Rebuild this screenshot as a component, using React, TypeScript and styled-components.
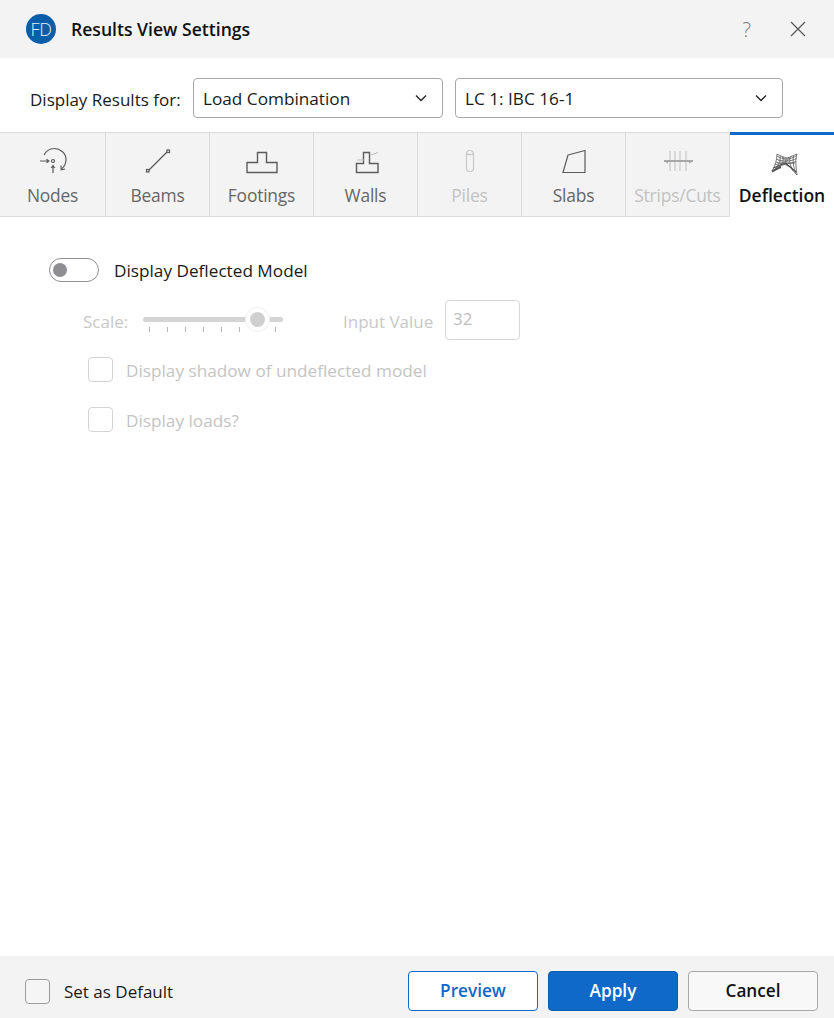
import React from "react";
import styled, { createGlobalStyle } from "styled-components";

const GlobalStyle = createGlobalStyle`
  html, body {
    margin: 0;
    padding: 0;
    background: #fff;
  }
  * {
    box-sizing: border-box;
  }
  body {
    font-family: "Open Sans", "Noto Sans", "Liberation Sans", sans-serif;
    color: #1a1a1a;
  }
`;

const Dialog = styled.div`
  width: 834px;
  height: 1018px;
  display: flex;
  flex-direction: column;
  overflow: hidden;
  background: #fff;
`;

const TitleBar = styled.header`
  height: 58px;
  flex: none;
  display: flex;
  align-items: center;
  padding: 0 27px 0 26px;
  background: #f3f3f3;
`;

const Logo = styled.div`
  width: 30px;
  height: 30px;
  border-radius: 50%;
  background: #0a5ea8;
  color: #e8f0f8;
  font-size: 18px;
  font-weight: 300;
  letter-spacing: -0.5px;
  display: flex;
  align-items: center;
  justify-content: center;
`;

const Title = styled.h1`
  margin: 0 0 0 15px;
  flex: 1;
  font-size: 17.6px;
  font-weight: 600;
  color: #111;
`;

const HelpMark = styled.span`
  font-size: 20px;
  font-weight: 300;
  color: #777;
  margin-right: 38px;
`;

const SelectRow = styled.div`
  height: 74px;
  flex: none;
  display: flex;
  align-items: center;
  padding: 6px 0 0 30px;
`;

const RowLabel = styled.span`
  width: 163px;
  padding-top: 3px;
  font-size: 17px;
  color: #1a1a1a;
`;

const SelectBox = styled.div<{ $width: number }>`
  width: ${({ $width }) => $width}px;
  height: 40px;
  margin-right: 12px;
  padding: 0 15px 0 9px;
  display: flex;
  align-items: center;
  justify-content: space-between;
  border: 1px solid #a8a8a8;
  border-radius: 4px;
  background: #fff;
  font-size: 17.2px;
  color: #1a1a1a;
`;

const TabBar = styled.nav`
  height: 85px;
  flex: none;
  display: flex;
  background: #f3f3f3;
  border-top: 1px solid #dcdcdc;
  border-bottom: 1px solid #dcdcdc;
`;

const Tab = styled.div<{ $active?: boolean; $disabled?: boolean }>`
  width: 104px;
  flex: none;
  display: flex;
  flex-direction: column;
  align-items: center;
  padding-top: 14px;
  border-right: 1px solid #dcdcdc;
  font-size: 17.4px;
  letter-spacing: -0.2px;
  font-weight: ${({ $active }) => ($active ? 600 : 400)};
  color: ${({ $active, $disabled }) =>
    $active ? "#111" : $disabled ? "#c2c2c2" : "#666"};
  background: ${({ $active }) => ($active ? "#fff" : "transparent")};

  &:first-child {
    width: 106px;
  }

  &:last-child {
    border-right: none;
    margin: -1px 0;
    height: 85px;
    border-top: 3px solid #0f69c9;
    padding-top: 12px;
    font-size: 17.5px;
    letter-spacing: 0;
  }
`;

const TabIcon = styled.svg<{ $disabled?: boolean }>`
  width: 32px;
  height: 30px;
  flex: none;
  fill: none;
  stroke: ${({ $disabled }) => ($disabled ? "#c8c8c8" : "#5c5c5c")};
  stroke-width: 1.2;
`;

const TabLabel = styled.span`
  margin-top: 6px;
  line-height: 24px;
  white-space: nowrap;
`;

const Content = styled.main`
  flex: 1;
  padding: 41px 0 0 49px;
  display: flex;
  flex-direction: column;
`;

const ToggleRow = styled.div`
  display: flex;
  align-items: center;
  gap: 15px;
  height: 24px;
  font-size: 17.2px;
`;

const Toggle = styled.div`
  position: relative;
  width: 50px;
  height: 24px;
  border: 1px solid #8f8f94;
  border-radius: 12px;
  background: #fff;
`;

const ToggleKnob = styled.span`
  position: absolute;
  left: 3px;
  top: 4px;
  width: 14px;
  height: 14px;
  border-radius: 50%;
  background: #8e8e93;
`;

const ScaleRow = styled.div`
  display: flex;
  align-items: center;
  height: 40px;
  margin-top: 18px;
  padding-left: 34px;
  font-size: 17px;
  color: #c8c8c8;
`;

const ScaleLabel = styled.span`
  width: 60px;
  padding-top: 2px;
`;

const Slider = styled.div`
  position: relative;
  width: 140px;
  height: 24px;
  margin-right: 60px;
`;

const SliderTrack = styled.div`
  position: absolute;
  left: 0;
  right: 0;
  top: 9px;
  height: 5px;
  border-radius: 2.5px;
  background: #d4d4d4;
`;

const SliderTicks = styled.div`
  position: absolute;
  left: 6px;
  top: 19px;
  width: 127px;
  display: flex;
  justify-content: space-between;
`;

const SliderTick = styled.span<{ $hidden?: boolean }>`
  width: 1px;
  height: 5px;
  background: ${({ $hidden }) => ($hidden ? "transparent" : "#b4b4b4")};
`;

const SliderThumb = styled.div`
  position: absolute;
  left: 102px;
  top: -1px;
  width: 25px;
  height: 25px;
  border-radius: 50%;
  background: #fff;
  border: 1px solid #f0f0f0;
  display: flex;
  align-items: center;
  justify-content: center;

  &::after {
    content: "";
    width: 15px;
    height: 15px;
    border-radius: 50%;
    background: #cfcfcf;
  }
`;

const ValueLabel = styled.span`
  width: 102px;
  padding-top: 2px;
`;

const ValueInput = styled.div`
  width: 75px;
  height: 40px;
  padding: 0 0 3px 7px;
  display: flex;
  align-items: center;
  border: 1px solid #d8d8d8;
  border-radius: 4px;
  color: #bdbdbd;
`;

const CheckRow = styled.label<{ $top: number }>`
  display: flex;
  align-items: center;
  gap: 13px;
  height: 25px;
  margin-top: ${({ $top }) => $top}px;
  padding-left: 39px;
  font-size: 17.2px;
  color: #c4c4c4;
`;

const CheckText = styled.span`
  padding-top: 1px;
`;

const CheckBox = styled.span<{ $enabled?: boolean }>`
  width: 25px;
  height: 25px;
  flex: none;
  border-radius: 4px;
  background: ${({ $enabled }) => ($enabled ? "#f5f5f5" : "#fff")};
  border: 1px solid ${({ $enabled }) => ($enabled ? "#9c9c9c" : "#d4d4d4")};
`;

const Footer = styled.footer`
  height: 62px;
  flex: none;
  display: flex;
  align-items: center;
  padding: 8px 16px 0 25px;
  background: #f3f3f3;
`;

const DefaultRow = styled.label`
  display: flex;
  align-items: center;
  gap: 14px;
  flex: 1;
  font-size: 17px;
  color: #1a1a1a;
`;

const Button = styled.button<{ $variant: "outline" | "primary" | "plain" }>`
  width: 130px;
  height: 40px;
  margin-left: 10px;
  border-radius: 4px;
  font-family: inherit;
  font-size: 17.2px;
  font-weight: 600;
  padding: 0 0 2px;
  border: 1px solid
    ${({ $variant }) =>
      $variant === "plain" ? "#a8a8a8" : $variant === "primary" ? "#0d5cb0" : "#0f69c9"};
  background: ${({ $variant }) =>
    $variant === "plain" ? "#f8f8f8" : $variant === "primary" ? "#0f69c9" : "#fff"};
  color: ${({ $variant }) =>
    $variant === "plain" ? "#111" : $variant === "primary" ? "#fff" : "#0f69c9"};
`;

const Chevron = () => (
  <svg width="12" height="8" viewBox="0 0 12 8" fill="none" stroke="#222" strokeWidth="1.3">
    <path d="M1 1.5l5 5 5-5" />
  </svg>
);

const NodesIcon = () => (
  <TabIcon viewBox="0 0 32 30">
    <path d="M7 8C9.500 3.500 13 1.500 17 1.500c6.500 0 12 5 12 11 0 4-2 7.500-4.500 9.500" />
    <path d="M24 18.500l.2 4.300 3.800-.8" />
    <circle cx="16" cy="14" r="1.500" />
    <path d="M3 14h8.500M9.500 12.200l2.400 1.800-2.400 1.800" />
    <path d="M16 26v-7M14.200 21l1.800-2.400 1.800 2.400" />
  </TabIcon>
);

const BeamsIcon = () => (
  <TabIcon viewBox="0 0 32 30">
    <path d="M6 24L26 4" />
    <rect x="4.500" y="22.500" width="2.500" height="2.500" fill="#f3f3f3" />
    <rect x="25" y="3" width="2.500" height="2.500" fill="#f3f3f3" />
  </TabIcon>
);

const FootingsIcon = () => (
  <TabIcon viewBox="0 0 32 30" style={{ strokeWidth: 1.4 }}>
    <path d="M11.500 5.500h9v10H31v10H1v-10h10.500z" />
  </TabIcon>
);

const WallsIcon = () => (
  <TabIcon viewBox="0 0 32 30" style={{ strokeWidth: 1.4 }}>
    <path d="M13.500 5.500h6v11h8.500v9H6.500v-9h7z" />
    <path d="M7 13h7M21 8l7-2.500" stroke="#bcbcbc" strokeWidth="1" />
  </TabIcon>
);

const PilesIcon = () => (
  <TabIcon viewBox="0 0 32 30" $disabled>
    <rect x="12.500" y="3.500" width="7" height="21" rx="3.500" />
    <path d="M12.500 6.500c1.500 1.400 5.500 1.400 7 0" />
  </TabIcon>
);

const SlabsIcon = () => (
  <TabIcon viewBox="0 0 32 30">
    <path d="M10 8L27 3.500V25.500H5z" />
  </TabIcon>
);

const StripsIcon = () => (
  <TabIcon viewBox="0 0 32 30" $disabled>
    <path d="M8 4v20M13 4v20M18 4v20M24 4v20" />
    <path d="M2 14h29" stroke="#a8a8a8" strokeWidth="2" />
    <path d="M2 13.500l4 2.500M31 13.500l-4 2.500" stroke="#a8a8a8" strokeWidth="1.400" />
  </TabIcon>
);

const DeflectionIcon = () => (
  <TabIcon viewBox="0 0 32 30" style={{ strokeWidth: 0.9, stroke: "#6a6a6a" }}>
    <path d="M11 7c3 2 7 3 10 4 4-1 7-3 10-4-2 5-1 13 0 21-4-4-7-9-11-11-5 1-10 5-14 7 3-5 5-11 5-17z" />
    <path d="M14 8.500c1 5-2 10-5 14M17 10c1 4-1 8-4 10M24 10c-1 5 1 10 3 14M27.500 8.500c-1 6 0 11 2 17M20.500 11c-1 2-1 4-.5 6" />
    <path d="M11 9c5 4 14 4 19.500-.5M10.500 12c5 3 15 2.500 20-.5M10 15c5 2 15 1.500 20-.5M9 17.500c3 0 6-1.500 9-1.500 4 0 8 1 11.500 0" />
    <path d="M12 13l11 7M24 12l-12 7M16 10l8 7M26 9l-11 8" stroke="#777" strokeWidth="0.7" />
    <path d="M7.500 21c4-2 8-4 12.500-4.500 3 2 6 5 10 8.500" stroke="#444" strokeWidth="1.200" />
    <path d="M6 24.500c3-1.500 6-3.500 9-4.500" stroke="#555" strokeWidth="2.200" />
  </TabIcon>
);

const tabs = [
  { name: "Nodes", icon: <NodesIcon /> },
  { name: "Beams", icon: <BeamsIcon /> },
  { name: "Footings", icon: <FootingsIcon /> },
  { name: "Walls", icon: <WallsIcon /> },
  { name: "Piles", icon: <PilesIcon />, disabled: true },
  { name: "Slabs", icon: <SlabsIcon /> },
  { name: "Strips/Cuts", icon: <StripsIcon />, disabled: true },
  { name: "Deflection", icon: <DeflectionIcon />, active: true },
];

const ticks = [0, 1, 2, 3, 4, 5, 6, 7];

export default function App() {
  return (
    <Dialog>
      <GlobalStyle />
      <TitleBar>
        <Logo>FD</Logo>
        <Title>Results View Settings</Title>
        <HelpMark>?</HelpMark>
        <svg width="18" height="18" viewBox="0 0 18 18" stroke="#555" strokeWidth="1.2">
          <path d="M2 2l14 14M16 2L2 16" />
        </svg>
      </TitleBar>

      <SelectRow>
        <RowLabel>Display Results for:</RowLabel>
        <SelectBox $width={250}>
          Load Combination
          <Chevron />
        </SelectBox>
        <SelectBox $width={328}>
          LC 1: IBC 16-1
          <Chevron />
        </SelectBox>
      </SelectRow>

      <TabBar>
        {tabs.map((tab) => (
          <Tab key={tab.name} $active={tab.active} $disabled={tab.disabled}>
            {tab.icon}
            <TabLabel>{tab.name}</TabLabel>
          </Tab>
        ))}
      </TabBar>

      <Content>
        <ToggleRow>
          <Toggle>
            <ToggleKnob />
          </Toggle>
          Display Deflected Model
        </ToggleRow>

        <ScaleRow>
          <ScaleLabel>Scale:</ScaleLabel>
          <Slider>
            <SliderTrack />
            <SliderTicks>
              {ticks.map((tick) => (
                <SliderTick key={tick} $hidden={tick === 6} />
              ))}
            </SliderTicks>
            <SliderThumb />
          </Slider>
          <ValueLabel>Input Value</ValueLabel>
          <ValueInput>32</ValueInput>
        </ScaleRow>

        <CheckRow $top={17}>
          <CheckBox />
          <CheckText>Display shadow of undeflected model</CheckText>
        </CheckRow>
        <CheckRow $top={25}>
          <CheckBox />
          <CheckText>Display loads?</CheckText>
        </CheckRow>
      </Content>

      <Footer>
        <DefaultRow>
          <CheckBox $enabled />
          Set as Default
        </DefaultRow>
        <Button $variant="outline">Preview</Button>
        <Button $variant="primary">Apply</Button>
        <Button $variant="plain">Cancel</Button>
      </Footer>
    </Dialog>
  );
}
